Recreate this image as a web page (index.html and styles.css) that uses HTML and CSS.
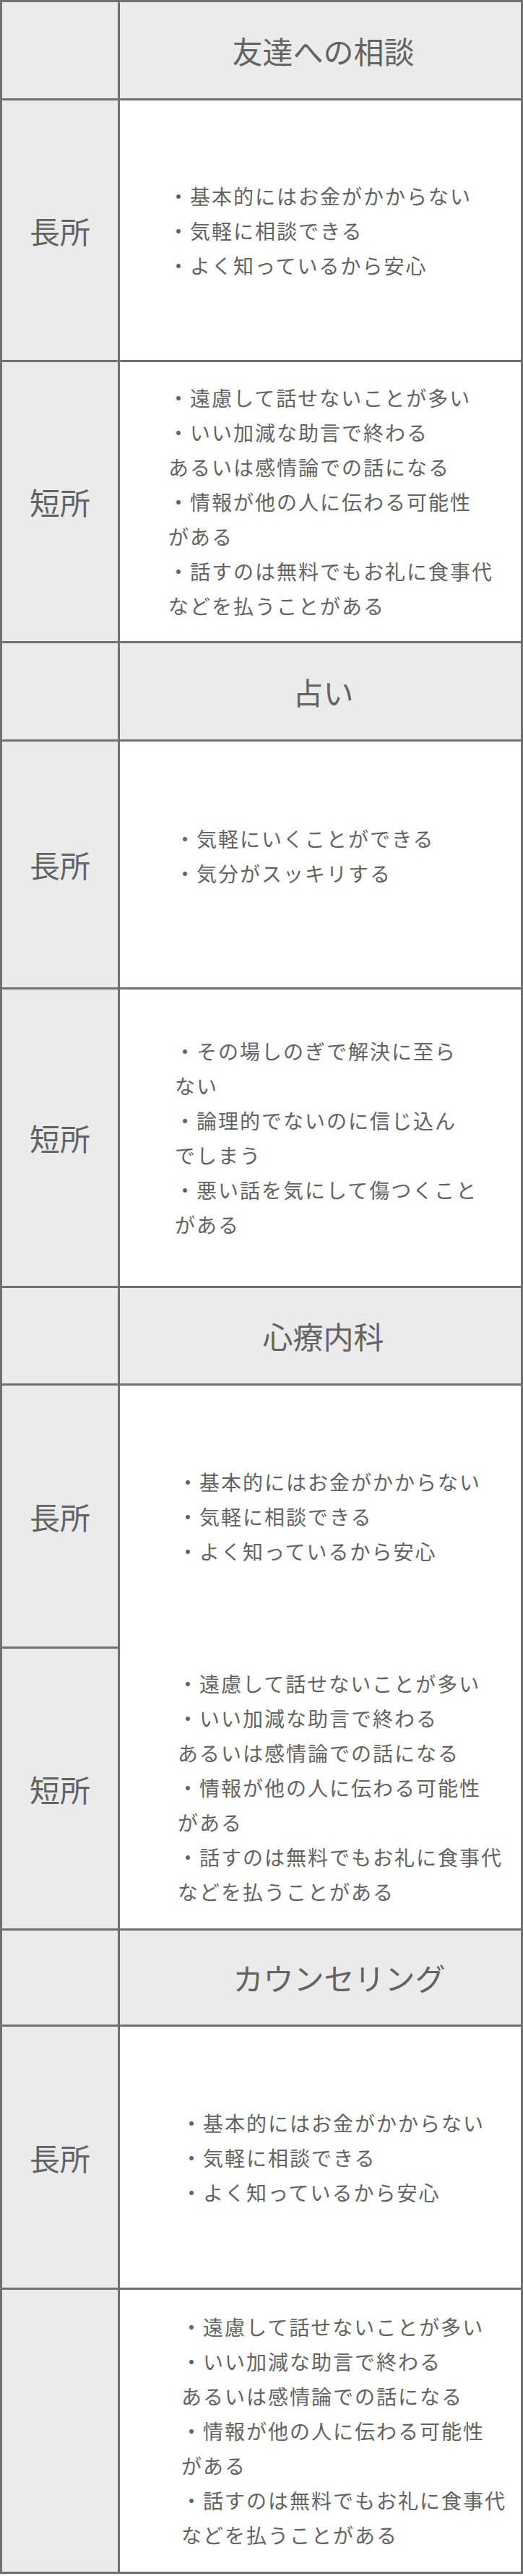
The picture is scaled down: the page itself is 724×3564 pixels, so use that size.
FILE: index.html
```html
<!DOCTYPE html>
<html lang="ja">
<head>
<meta charset="utf-8">
<title>相談先の比較</title>
<link rel="stylesheet" href="styles.css">
</head>
<body>
<div class="table">
  <div class="row row--head h-133">
    <div class="label"></div>
    <div class="cell cell--head">友達への相談</div>
  </div>
  <div class="row h-359">
    <div class="label">長所</div>
    <div class="cell pad-1">・基本的にはお金がかからない<br>・気軽に相談できる<br>・よく知っているから安心</div>
  </div>
  <div class="row h-386">
    <div class="label">短所</div>
    <div class="cell pad-1">・遠慮して話せないことが多い<br>・いい加減な助言で終わる<br>あるいは感情論での話になる<br>・情報が他の人に伝わる可能性<br>がある<br>・話すのは無料でもお礼に食事代<br>などを払うことがある</div>
  </div>

  <div class="row row--head h-133">
    <div class="label"></div>
    <div class="cell cell--head">占い</div>
  </div>
  <div class="row h-340">
    <div class="label">長所</div>
    <div class="cell pad-2 up-12">・気軽にいくことができる<br>・気分がスッキリする</div>
  </div>
  <div class="row h-410">
    <div class="label">短所</div>
    <div class="cell pad-2">・その場しのぎで解決に至ら<br>ない<br>・論理的でないのに信じ込ん<br>でしまう<br>・悪い話を気にして傷つくこと<br>がある</div>
  </div>

  <div class="row row--head h-132">
    <div class="label"></div>
    <div class="cell cell--head">心療内科</div>
  </div>
  <div class="row h-361">
    <div class="label">長所</div>
    <div class="cell pad-3">・基本的にはお金がかからない<br>・気軽に相談できる<br>・よく知っているから安心</div>
  </div>
  <div class="row row--split h-390">
    <div class="label">短所</div>
    <div class="cell pad-3">・遠慮して話せないことが多い<br>・いい加減な助言で終わる<br>あるいは感情論での話になる<br>・情報が他の人に伝わる可能性<br>がある<br>・話すのは無料でもお礼に食事代<br>などを払うことがある</div>
  </div>

  <div class="row row--head h-130">
    <div class="label"></div>
    <div class="cell cell--head cell--shift">カウンセリング</div>
  </div>
  <div class="row h-361">
    <div class="label">長所</div>
    <div class="cell pad-4">・基本的にはお金がかからない<br>・気軽に相談できる<br>・よく知っているから安心</div>
  </div>
  <div class="row h-390">
    <div class="label"></div>
    <div class="cell pad-4">・遠慮して話せないことが多い<br>・いい加減な助言で終わる<br>あるいは感情論での話になる<br>・情報が他の人に伝わる可能性<br>がある<br>・話すのは無料でもお礼に食事代<br>などを払うことがある</div>
  </div>
</div>
</body>
</html>
```

FILE: styles.css
```css
html, body {
  margin: 0;
  padding: 0;
  background: #ffffff;
}

body {
  font-family: "Noto Sans CJK JP", "Noto Sans", sans-serif;
  color: #636363;
}

.table {
  width: 718px;
  border: 3px solid #707070;
}

.row {
  display: grid;
  grid-template-columns: 163px 1fr;
  border-top: 3px solid #707070;
}

.row:first-child {
  border-top: 0;
}

.row--split {
  border-top: 0;
}

.row--split > .label {
  border-top: 3px solid #707070;
}

.label {
  background: #ebebeb;
  border-right: 3px solid #707070;
  display: flex;
  align-items: center;
  justify-content: center;
  font-size: 42px;
  line-height: 1;
}

.cell {
  background: #ffffff;
  display: flex;
  flex-direction: column;
  justify-content: center;
  font-size: 28px;
  letter-spacing: 2px;
  line-height: 48px;
  white-space: nowrap;
}

.cell--head {
  background: #ebebeb;
  align-items: center;
  font-size: 42px;
  letter-spacing: 0;
  line-height: 1;
  padding-left: 8px;
}

.cell--shift {
  padding-left: 52px;
}

.pad-1 { padding-left: 67px; }
.pad-2 { padding-left: 76px; }
.pad-3 { padding-left: 80px; }
.pad-4 { padding-left: 85px; }

.up-12 { padding-bottom: 24px; }

.h-130 { height: 130px; }
.h-132 { height: 132px; }
.h-133 { height: 133px; }
.h-340 { height: 340px; }
.h-359 { height: 359px; }
.h-361 { height: 361px; }
.h-386 { height: 386px; }
.h-390 { height: 390px; }
.h-410 { height: 410px; }
```
